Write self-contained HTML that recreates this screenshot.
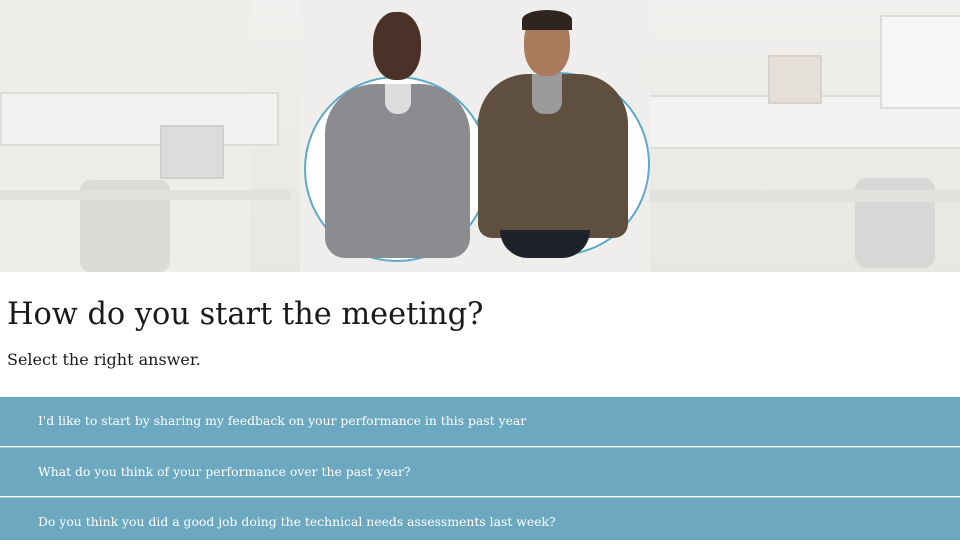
<!DOCTYPE html>
<html><head><style>
body{margin:0;width:960px;height:540px;overflow:hidden;background:#fff;font-family:"DejaVu Serif","Liberation Serif",serif;position:relative}
.hero{position:absolute;left:0;top:0;width:960px;height:272px;background:linear-gradient(180deg,#f1f0ee 0%,#eceae6 60%,#e9e7e3 100%);overflow:hidden}
.b{position:absolute}
h1{position:absolute;left:7px;top:297px;margin:0;font-weight:normal;font-size:30.4px;color:#1a1a1a}
.sub{position:absolute;left:7px;top:350px;font-size:16px;color:#1a1a1a}
.opt{position:absolute;left:0;width:960px;height:49px;background:#6ca8bf;color:#fff;font-size:12.4px;line-height:48px;padding-left:38px;box-sizing:border-box}
</style></head><body>
<div class="hero">
 <div class="b" style="left:0;top:0;width:250px;height:272px;background:#eeedea"></div>
 <div class="b" style="left:0;top:92px;width:275px;height:50px;border:2px solid #dedcd8;background:#f2f1ef"></div>
 <div class="b" style="left:160px;top:125px;width:60px;height:50px;background:#dcdcda;border:2px solid #cfcfcd"></div>
 <div class="b" style="left:80px;top:180px;width:90px;height:92px;background:#dddbd7;border-radius:10px"></div>
 <div class="b" style="left:0;top:190px;width:290px;height:10px;background:#e2e0dc"></div>
 <div class="b" style="left:630px;top:95px;width:330px;height:50px;border:2px solid #dedcd8;background:#f3f2f0"></div>
 <div class="b" style="left:768px;top:55px;width:50px;height:45px;background:#e4dfd8;border:2px solid #d8d2ca"></div>
 <div class="b" style="left:880px;top:15px;width:80px;height:90px;background:#f6f6f5;border:2px solid #dedcd8"></div>
 <div class="b" style="left:855px;top:178px;width:80px;height:90px;background:#d8d7d5;border-radius:12px"></div>
 <div class="b" style="left:640px;top:190px;width:320px;height:12px;background:#e3e1dd"></div>
 <div class="b" style="left:300px;top:0;width:350px;height:272px;background:#efeeec"></div>
 <div class="b" style="left:466px;top:72px;width:180px;height:180px;border-radius:50%;background:#fff;border:2px solid #5eaac4"></div>
 <div class="b" style="left:304px;top:76px;width:182px;height:182px;border-radius:50%;background:#fff;border:2px solid #5eaac4"></div>
 <div class="b" style="left:325px;top:84px;width:145px;height:174px;border-radius:50px 50px 20px 20px;background:#8a8c8f"></div>
 <div class="b" style="left:385px;top:84px;width:26px;height:30px;background:#ddd;border-radius:0 0 12px 12px"></div>
 <div class="b" style="left:373px;top:12px;width:48px;height:68px;border-radius:45%;background:#4a3228"></div>
 <div class="b" style="left:478px;top:74px;width:150px;height:164px;border-radius:50px 50px 14px 14px;background:#5f4f3e"></div>
 <div class="b" style="left:532px;top:74px;width:30px;height:40px;background:#9a9a9c;border-radius:0 0 12px 12px"></div>
 <div class="b" style="left:500px;top:230px;width:90px;height:28px;background:#1f2228;border-radius:0 0 30px 30px"></div>
 <div class="b" style="left:524px;top:12px;width:46px;height:64px;border-radius:45%;background:#a97a5c"></div>
 <div class="b" style="left:522px;top:10px;width:50px;height:20px;border-radius:50% 50% 0 0;background:#2e2420"></div>
</div>
<h1>How do you start the meeting?</h1>
<div class="sub">Select the right answer.</div>
<div class="opt" style="top:397px">I'd like to start by sharing my feedback on your performance in this past year</div>
<div class="opt" style="top:447px;border-top:1px solid #9cc6d5">What do you think of your performance over the past year?</div>
<div class="opt" style="top:497px;height:43px;border-top:1px solid #9cc6d5">Do you think you did a good job doing the technical needs assessments last week?</div>
</body></html>
